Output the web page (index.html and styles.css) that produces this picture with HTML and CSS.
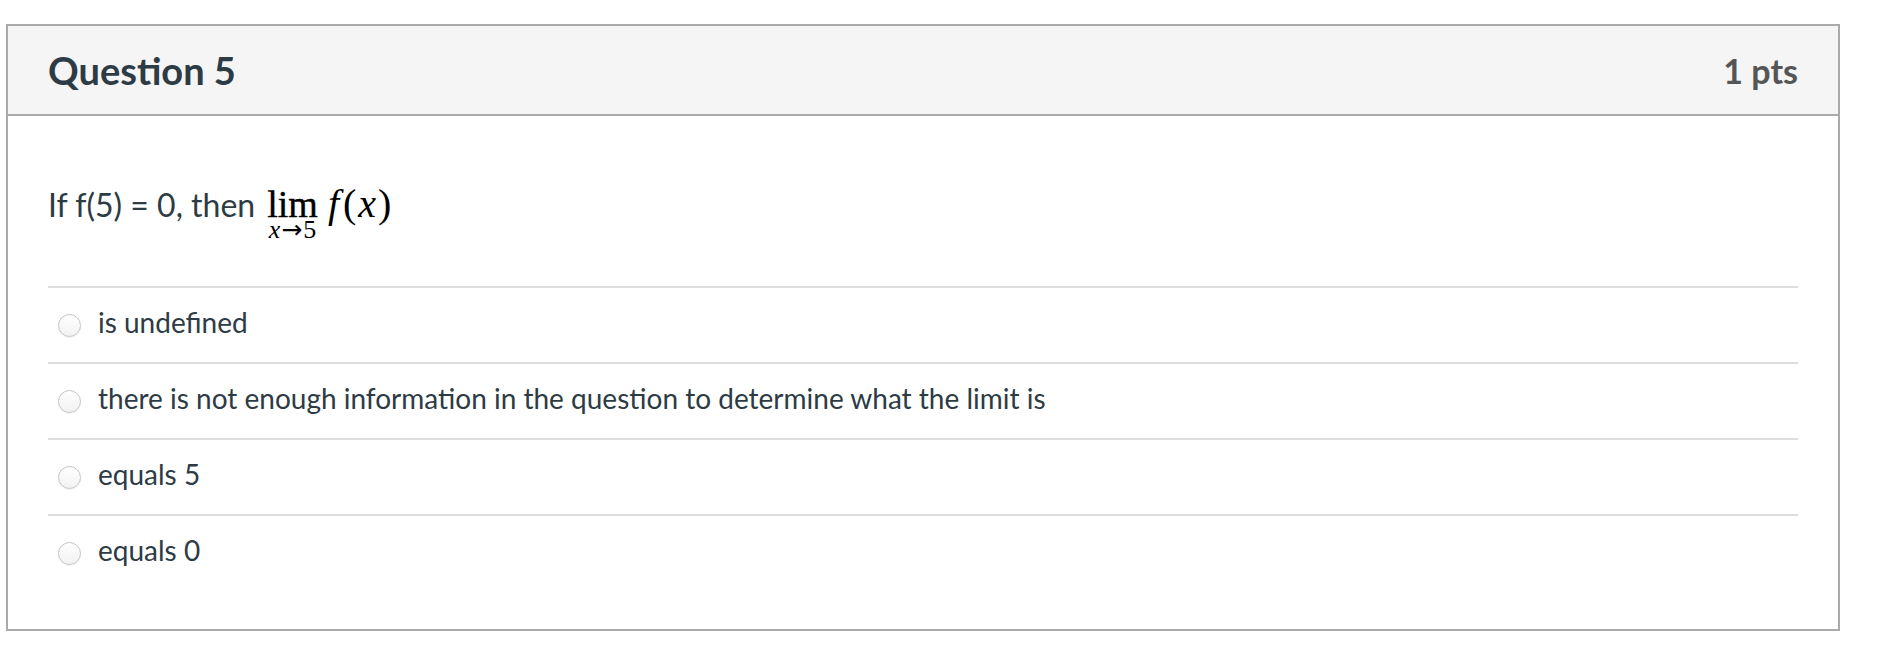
FILE: index.html
```html
<!DOCTYPE html>
<html lang="en">
<head>
<meta charset="utf-8">
<title>Question 5</title>
<link rel="stylesheet" href="styles.css">
</head>
<body>
<div class="page">
  <div class="question">
    <div class="q-header">
      <h2 class="q-title">Question 5</h2>
      <div class="q-points">1 pts</div>
    </div>
    <div class="q-body">
      <div class="q-text">If f(5) = 0, then<span class="lim"><span class="lim-word">lim</span><span class="lim-sub"><i>x</i><span class="arrow">→</span>5</span></span><span class="fx"><i class="fi">f</i>(<i>x</i>)</span></div>
      <div class="answers">
        <label class="answer"><span class="radio"></span><span class="answer-text">is undefined</span></label>
        <label class="answer"><span class="radio"></span><span class="answer-text">there is not enough information in the question to determine what the limit is</span></label>
        <label class="answer"><span class="radio"></span><span class="answer-text">equals 5</span></label>
        <label class="answer"><span class="radio"></span><span class="answer-text">equals 0</span></label>
      </div>
    </div>
  </div>
</div>
</body>
</html>
```
FILE: styles.css
```css
html, body {
  margin: 0;
  padding: 0;
  background: #ffffff;
}

body {
  font-family: Lato, "Open Sans", "Liberation Sans", sans-serif;
  color: #2d3b45;
}

.page {
  padding: 24px 0 0 6px;
}

.question {
  width: 1834px;
  box-sizing: border-box;
  border: 2px solid #aaaaaa;
  background: #ffffff;
}

.q-header {
  height: 88px;
  padding: 0 40px;
  background: #f5f5f5;
  border-bottom: 2px solid #aaaaaa;
  display: flex;
  align-items: center;
  justify-content: space-between;
}

.q-title {
  margin: 0;
  font-size: 38px;
  font-weight: 700;
  line-height: normal;
  color: #2d3b45;
}

.q-points {
  font-size: 34px;
  font-weight: 700;
  color: #555555;
  line-height: normal;
}

.q-body {
  padding: 0 40px 39px 40px;
}

.q-text {
  font-size: 32px;
  line-height: normal;
  padding-top: 64px;
  padding-bottom: 47px;
}

.lim {
  display: inline-flex;
  flex-direction: column;
  align-items: center;
  margin-left: 12px;
  font-family: "Liberation Serif", "DejaVu Serif", serif;
  color: #000000;
}

.lim-word {
  font-size: 38px;
  line-height: 0.9;
  -webkit-text-stroke: 0.4px #000000;
}

.lim-sub {
  font-size: 26px;
  line-height: 18px;
  margin-top: 0;
}

.arrow {
  font-family: "DejaVu Sans", sans-serif;
  font-size: 25px;
  margin: 0 1px;
}

.fx {
  font-family: "Liberation Serif", "DejaVu Serif", serif;
  font-size: 40px;
  color: #000000;
  margin-left: 10px;
  letter-spacing: 2px;
}

.fx .fi {
  margin-right: 2px;
}

.answers {
  display: flex;
  flex-direction: column;
}

.answer {
  display: flex;
  align-items: flex-start;
  border-top: 2px solid #dddddd;
  padding: 13px 0 19px 10px;
  font-size: 28px;
  line-height: 42px;
}

.radio {
  flex: none;
  width: 23px;
  height: 23px;
  box-sizing: border-box;
  margin-top: 13px;
  margin-right: 17px;
  border-radius: 50%;
  border: 1px solid #c4c4c4;
  background: linear-gradient(#ffffff, #f2f2f2);
  box-shadow: inset 0 1px 1px rgba(255, 255, 255, 0.9), 0 1px 0 rgba(0, 0, 0, 0.04);
}

.answer-text {
  color: #2d3b45;
}
```
